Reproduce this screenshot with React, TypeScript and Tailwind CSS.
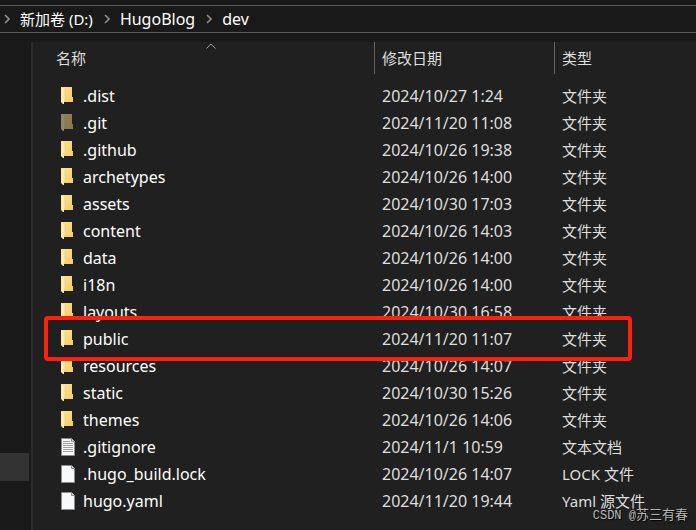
type Kind = "folder" | "hidden" | "text" | "file";
type Entry = { name: string; date: string; type: string; kind: Kind; marked?: boolean };

const entries: Entry[] = [
  { name: ".dist", date: "2024/10/27 1:24", type: "文件夹", kind: "folder" },
  { name: ".git", date: "2024/11/20 11:08", type: "文件夹", kind: "hidden" },
  { name: ".github", date: "2024/10/26 19:38", type: "文件夹", kind: "folder" },
  { name: "archetypes", date: "2024/10/26 14:00", type: "文件夹", kind: "folder" },
  { name: "assets", date: "2024/10/30 17:03", type: "文件夹", kind: "folder" },
  { name: "content", date: "2024/10/26 14:03", type: "文件夹", kind: "folder" },
  { name: "data", date: "2024/10/26 14:00", type: "文件夹", kind: "folder" },
  { name: "i18n", date: "2024/10/26 14:00", type: "文件夹", kind: "folder" },
  { name: "layouts", date: "2024/10/30 16:58", type: "文件夹", kind: "folder" },
  { name: "public", date: "2024/11/20 11:07", type: "文件夹", kind: "folder", marked: true },
  { name: "resources", date: "2024/10/26 14:07", type: "文件夹", kind: "folder" },
  { name: "static", date: "2024/10/30 15:26", type: "文件夹", kind: "folder" },
  { name: "themes", date: "2024/10/26 14:06", type: "文件夹", kind: "folder" },
  { name: ".gitignore", date: "2024/11/1 10:59", type: "文本文档", kind: "text" },
  { name: ".hugo_build.lock", date: "2024/10/26 14:07", type: "LOCK 文件", kind: "file" },
  { name: "hugo.yaml", date: "2024/11/20 19:44", type: "Yaml 源文件", kind: "file" },
];

function FolderIcon({ dim }: { dim?: boolean }) {
  return (
    <svg viewBox="0 0 15 20" className={`h-5 w-[15px] ${dim ? "opacity-50" : ""}`} aria-hidden="true">
      <defs>
        <linearGradient id="folder-back" x1="0" y1="0" x2="1" y2="1">
          <stop offset="0" stopColor="#fbe49a" />
          <stop offset="1" stopColor="#f3cd66" />
        </linearGradient>
      </defs>
      <path d="M1 1h11v10h1v5H4L1 15z" fill="url(#folder-back)" />
      <path d="M1 1l2.500 1.500 1.500.5v12H4v3H3l-2-2z" fill="#ffebb0" />
      <path d="M5 3v12H4" fill="none" stroke="#e9c770" strokeWidth=".7" />
    </svg>
  );
}

function FileIcon({ lines }: { lines?: boolean }) {
  return (
    <svg viewBox="0 0 16 20" className="h-5 w-4" aria-hidden="true">
      <path d="M1.500 1.500h10l3 3v14h-13z" fill="#f8f9fa" stroke="#8c8c8c" />
      <path d="M11.500 1.500v3h3" fill="#dcdcdc" stroke="#8c8c8c" />
      {lines && <path d="M3 4.500h7M3 6.500h10M3 8.500h10M3 10.500h10M3 12.500h10M3 14.500h10" stroke="#a0a0a0" />}
    </svg>
  );
}

function Chevron() {
  return (
    <svg viewBox="0 0 6 10" className="h-[10px] w-[6px] shrink-0" fill="none" stroke="#8f8f8f" strokeWidth="1.6" aria-hidden="true">
      <path d="M1 1l4 4-4 4" />
    </svg>
  );
}

export default function App() {
  return (
    <div className="flex min-h-screen flex-col bg-[#191919] font-['Noto_Sans','Noto_Sans_CJK_SC',sans-serif] text-[15px] leading-5 text-white">
      <nav aria-label="路径" className="mt-[5px] flex h-7 items-center gap-[10px] border-y border-[#5a5a5a] pl-1">
        <Chevron />
        <button className="pr-px">新加卷 (D:)</button>
        <Chevron />
        <button className="pr-px text-base leading-5">HugoBlog</button>
        <Chevron />
        <button className="pr-px text-base leading-5">dev</button>
      </nav>
      <div className="flex flex-1 pt-[9px]">
        <aside className="flex w-[33px] shrink-0 flex-col border-r-2 border-[#2b2b2b]">
          <div className="mt-[411px] h-7 w-[29px] bg-[#333333]" />
        </aside>
        <main className="relative min-w-0 flex-1 bg-[#202020]">
          <svg viewBox="0 0 10 6" className="absolute left-[173px] top-px h-[6px] w-[10px]" fill="none" stroke="#a0a0a0" aria-hidden="true">
            <path d="M.5 5.500l4.500-4.500 4.500 4.500" />
          </svg>
          <table className="w-full table-fixed border-collapse text-left">
            <colgroup>
              <col className="w-[341px]" />
              <col className="w-[180px]" />
              <col />
            </colgroup>
            <thead>
              <tr className="h-10 align-top text-[#dedede]">
                <th className="p-0 font-normal">
                  <button className="h-8 pl-[23px]">名称</button>
                </th>
                <th className="p-0 font-normal">
                  <button className="h-8 w-full border-l border-[#636363] pl-[7px] text-left">修改日期</button>
                </th>
                <th className="p-0 font-normal">
                  <button className="h-8 w-full border-l border-[#636363] pl-[7px] text-left">类型</button>
                </th>
              </tr>
            </thead>
            <tbody>
              {entries.map((e) => (
                <tr key={e.name} className="relative h-[27px] text-[#dedede]">
                  <td className="p-0 text-base leading-5 text-white">
                    <div className="flex items-center pl-[27px]">
                      <span className="flex w-[23px] shrink-0">
                        {e.kind === "folder" || e.kind === "hidden" ? (
                          <FolderIcon dim={e.kind === "hidden"} />
                        ) : (
                          <FileIcon lines={e.kind === "text"} />
                        )}
                      </span>
                      {e.name}
                    </div>
                    {e.marked && (
                      <span className="absolute -top-[9px] left-[11px] z-10 h-[45px] w-[588px] rounded-[4px] border-4 border-[#ff2010]" />
                    )}
                  </td>
                  <td className="p-0 pl-2 text-base leading-5">{e.date}</td>
                  <td className="p-0 pl-2">{e.type}</td>
                </tr>
              ))}
            </tbody>
          </table>
          <p className="absolute bottom-1 right-2 font-['Liberation_Mono','Noto_Sans_CJK_SC',monospace] text-xs leading-5 text-[#b8b8b8] [text-shadow:1px_1px_1px_#000]">
            CSDN @<span className="text-[13px]">苏三有春</span>
          </p>
        </main>
      </div>
    </div>
  );
}
